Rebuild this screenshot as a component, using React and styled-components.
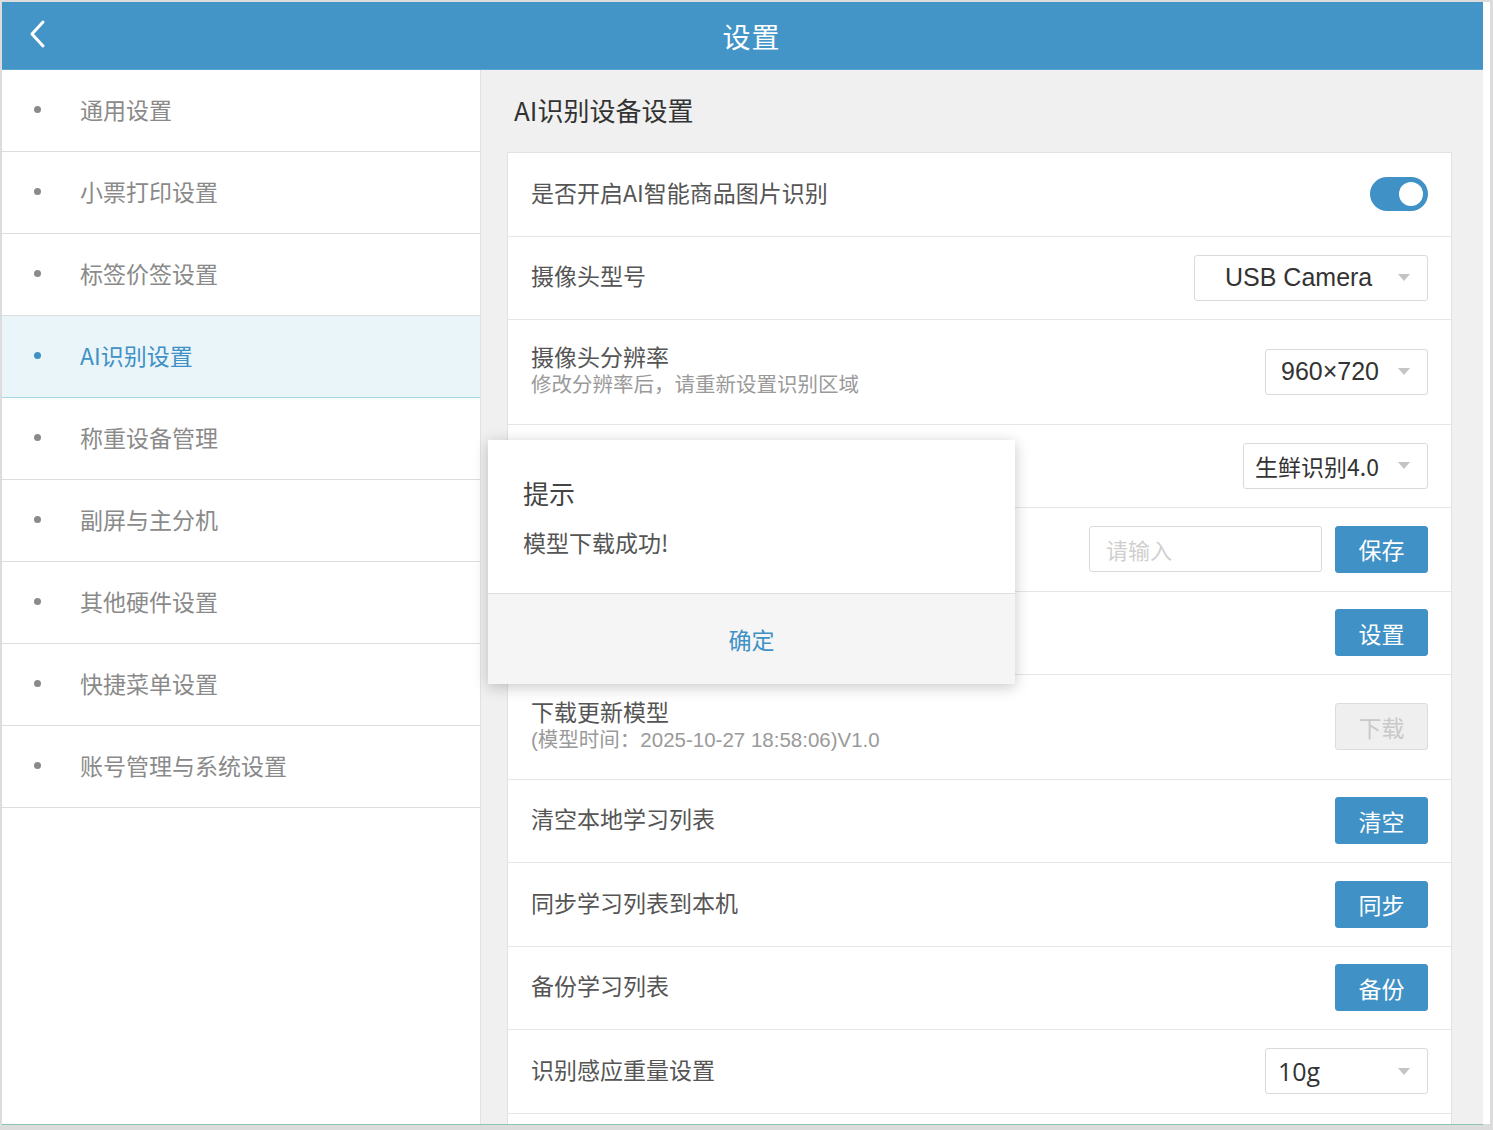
import React from "react"
import styled, { createGlobalStyle } from "styled-components"

const GlobalStyle = createGlobalStyle`
  body {
    margin: 0;
    background: #dcdcdc;
    font-family: "Noto Sans CJK SC", "Noto Sans", sans-serif;
  }
`

const BLUE = "#3f91c6"

const menu = [
  "通用设置",
  "小票打印设置",
  "标签价签设置",
  "AI识别设置",
  "称重设备管理",
  "副屏与主分机",
  "其他硬件设置",
  "快捷菜单设置",
  "账号管理与系统设置",
]

export default () => (
  <Frame>
    <GlobalStyle />
    <Screen>
      <Header>
        <BackButton>
          <svg width="20" height="30" viewBox="0 0 20 30">
            <path d="M15 3 L4 15 L15 27" fill="none" stroke="#fff" strokeWidth="3" strokeLinecap="round" strokeLinejoin="round" />
          </svg>
        </BackButton>
        <HeaderTitle>设置</HeaderTitle>
      </Header>

      <Body>
        <Sidebar>
          {menu.map(label => (
            <MenuItem key={label} active={label === "AI识别设置"}>
              <Dot active={label === "AI识别设置"} />
              <span>{label}</span>
            </MenuItem>
          ))}
        </Sidebar>

        <Content>
          <PageTitle>AI识别设备设置</PageTitle>
          <Card>
            <Row>
              <Label>是否开启AI智能商品图片识别</Label>
              <Toggle />
            </Row>
            <Row>
              <Label>摄像头型号</Label>
              <Select width={234} pad={30}>
                <span>USB Camera</span>
                <Caret />
              </Select>
            </Row>
            <Row tall>
              <LabelBlock>
                <Label>摄像头分辨率</Label>
                <Sub>修改分辨率后，请重新设置识别区域</Sub>
              </LabelBlock>
              <Select width={163} pad={15}>
                <span>960×720</span>
                <Caret />
              </Select>
            </Row>
            <Row>
              <Label>识别模型</Label>
              <Select width={185} pad={11} cjk>
                <span>生鲜识别4.0</span>
                <Caret />
              </Select>
            </Row>
            <Row>
              <Label>识别区域名称</Label>
              <Controls>
                <Input placeholder="请输入" />
                <Button>保存</Button>
              </Controls>
            </Row>
            <Row>
              <Label>识别区域设置</Label>
              <Button>设置</Button>
            </Row>
            <Row tall>
              <LabelBlock>
                <Label>下载更新模型</Label>
                <Sub>(模型时间：2025-10-27 18:58:06)V1.0</Sub>
              </LabelBlock>
              <Button disabled>下载</Button>
            </Row>
            <Row>
              <Label>清空本地学习列表</Label>
              <Button>清空</Button>
            </Row>
            <Row>
              <Label>同步学习列表到本机</Label>
              <Button>同步</Button>
            </Row>
            <Row>
              <Label>备份学习列表</Label>
              <Button>备份</Button>
            </Row>
            <Row>
              <Label>识别感应重量设置</Label>
              <Select width={163} pad={12} latin>
                <span>10g</span>
                <Caret />
              </Select>
            </Row>
            <Row />
          </Card>
        </Content>
      </Body>
    </Screen>
    <RightEdge />

    <Dialog>
      <DialogBody>
        <DialogTitle>提示</DialogTitle>
        <DialogText>模型下载成功!</DialogText>
      </DialogBody>
      <DialogFooter>确定</DialogFooter>
    </Dialog>
  </Frame>
)

const Frame = styled.div`
  position: relative;
  display: flex;
  width: 1493px;
  height: 1130px;
  padding: 2px 0 0 2px;
  box-sizing: border-box;
  background: #dcdcdc;
  overflow: hidden;
`

const Screen = styled.div`
  display: flex;
  flex-direction: column;
  width: 1481px;
  height: 1122px;
  flex: none;
  background: #fff;
  border-bottom: 1px solid #8fc3b6;
  overflow: hidden;
`

const RightEdge = styled.div`
  width: 7px;
  height: 1122px;
  flex: none;
  background: #fff;
`

const Header = styled.div`
  position: relative;
  display: flex;
  align-items: center;
  justify-content: center;
  height: 67px;
  flex: none;
  background: #4395c8;
  border-bottom: 1px solid #5aa6d3;
`

const BackButton = styled.div`
  position: absolute;
  left: 26px;
  top: 17px;
  display: flex;
`

const HeaderTitle = styled.div`
  margin-left: 18px;
  color: #fff;
  font-size: 28px;
  letter-spacing: 1px;
`

const Body = styled.div`
  display: flex;
  flex: 1;
  min-height: 0;
`

const Sidebar = styled.div`
  width: 478px;
  flex: none;
  background: #fff;
  border-right: 1px solid #e2e2e2;
`

const MenuItem = styled.div`
  display: flex;
  align-items: center;
  gap: 39px;
  height: 82px;
  box-sizing: border-box;
  padding: 0 0 3px 32px;
  font-size: 23px;
  color: ${p => (p.active ? BLUE : "#8a8a8a")};
  background: ${p => (p.active ? "#eaf5f9" : "#fff")};
  border-bottom: 1px solid ${p => (p.active ? "#a9d7e6" : "#dedede")};
`

const Dot = styled.i`
  width: 7px;
  height: 7px;
  border-radius: 50%;
  background: ${p => (p.active ? BLUE : "#8a8a8a")};
`

const Content = styled.div`
  flex: 1;
  display: flex;
  flex-direction: column;
  padding: 0 31px 0 26px;
  background: #f0f0f0;
  overflow: hidden;
`

const PageTitle = styled.div`
  display: flex;
  align-items: center;
  height: 82px;
  flex: none;
  padding: 0 0 4px 7px;
  box-sizing: border-box;
  font-size: 26px;
  color: #333;
`

const Card = styled.div`
  flex: none;
  background: #fff;
  border: 1px solid #e2e2e2;
  border-bottom: none;
`

const Label = styled.div`
  font-size: 23px;
  color: #555;
`

const Row = styled.div`
  display: flex;
  align-items: center;
  justify-content: space-between;
  height: ${p => (p.tall ? 103.5 : 82.5)}px;
  padding: 0 23px;
  border-bottom: 1px solid #e6e6e6;

  & > ${Label} {
    margin-bottom: 5px;
  }
`

const LabelBlock = styled.div`
  display: flex;
  flex-direction: column;
  gap: 2px;
  margin-bottom: 3px;
  line-height: 1.2;
`

const Sub = styled.div`
  font-family: "Liberation Sans", "Noto Sans CJK SC", sans-serif;
  font-size: 20.5px;
  color: #9a9a9a;
`

const Controls = styled.div`
  display: flex;
  align-items: center;
  gap: 13px;
`

const Toggle = styled.div`
  position: relative;
  width: 58px;
  height: 34px;
  border-radius: 17px;
  background: ${BLUE};
  &::after {
    content: "";
    position: absolute;
    right: 5px;
    top: 5px;
    width: 24px;
    height: 24px;
    border-radius: 50%;
    background: #fff;
  }
`

const Select = styled.div`
  display: flex;
  align-items: center;
  justify-content: space-between;
  width: ${p => p.width}px;
  height: 46px;
  box-sizing: border-box;
  padding: 0 17px 0 ${p => p.pad}px;
  border: 1px solid #dadada;
  border-radius: 3px;
  font-family: ${p =>
    p.cjk
      ? `"Noto Sans CJK SC", sans-serif`
      : p.latin
      ? `"Open Sans", sans-serif`
      : `"Liberation Sans", Arial, sans-serif`};
  font-size: ${p => (p.cjk ? 23 : 25)}px;
  color: #333;
`

const Caret = styled.i`
  width: 0;
  height: 0;
  border-left: 6px solid transparent;
  border-right: 6px solid transparent;
  border-top: 7px solid #c4c4c4;
`

const Input = styled.input`
  width: 233px;
  height: 46px;
  box-sizing: border-box;
  padding: 0 16px;
  border: 1px solid #dadada;
  border-radius: 3px;
  font-family: "Noto Sans CJK SC", sans-serif;
  font-size: 22px;
  color: #333;
  outline: none;
  &::placeholder {
    color: #cfcfcf;
  }
`

const Button = styled.button`
  width: 93px;
  height: 47px;
  border-radius: 3px;
  font-family: "Noto Sans CJK SC", sans-serif;
  font-size: 23px;
  color: ${p => (p.disabled ? "#c9c9c9" : "#fff")};
  background: ${p => (p.disabled ? "#efefef" : BLUE)};
  border: 1px solid ${p => (p.disabled ? "#dcdcdc" : BLUE)};
  padding: 0;
`

const Dialog = styled.div`
  position: absolute;
  left: 488px;
  top: 440px;
  width: 527px;
  height: 244px;
  display: flex;
  flex-direction: column;
  background: #fff;
  box-shadow: 0 3px 14px rgba(0, 0, 0, 0.22);
`

const DialogBody = styled.div`
  height: 154px;
  padding: 35px 35px 0;
  box-sizing: border-box;
  border-bottom: 1px solid #dedede;
`

const DialogTitle = styled.div`
  font-size: 26px;
  color: #444;
  line-height: 36px;
`

const DialogText = styled.div`
  margin-top: 15px;
  font-size: 23px;
  color: #555;
  line-height: 32px;
`

const DialogFooter = styled.div`
  flex: 1;
  display: flex;
  align-items: center;
  justify-content: center;
  background: #f5f5f5;
  font-size: 23px;
  color: ${BLUE};
`
